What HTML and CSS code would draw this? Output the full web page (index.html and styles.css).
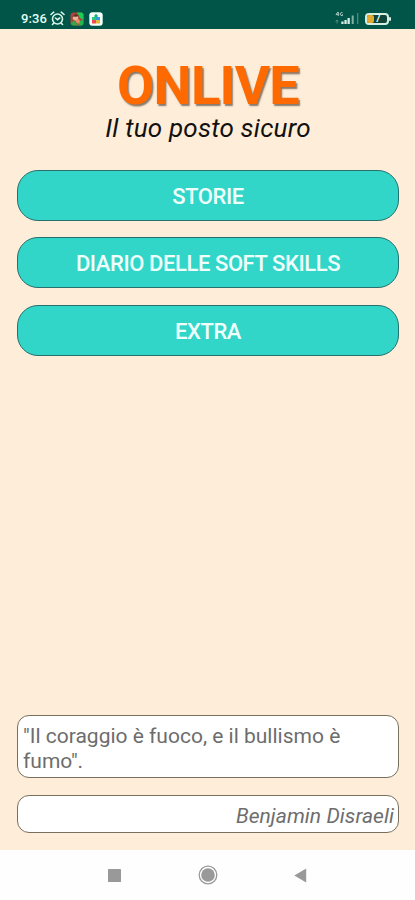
FILE: index.html
```html
<!DOCTYPE html>
<html lang="it">
<head>
<meta charset="utf-8">
<title>Onlive</title>
<link rel="stylesheet" href="styles.css">
</head>
<body>
<div class="screen">
  <header class="status">
    <div class="status-left">
      <span class="time">9:36</span>
      <svg class="alarm" width="15" height="15" viewBox="0 0 15 15" fill="none" stroke="#d7f5eb" stroke-width="1.6" stroke-linecap="round"><circle cx="7.5" cy="8" r="5"/><path d="M1 3.5 3.7 1.2M14 3.5 11.3 1.2M5.5 7 7.5 8.7 9.7 7M3.8 12 2.5 13.5M11.2 12l1.3 1.5"/></svg>
      <svg class="game" width="14" height="14" viewBox="0 0 14 14"><rect x=".5" y=".5" width="13" height="13" rx="3" fill="#a7473b"/><path d="M7 .5h4a2.5 2.5 0 0 1 2.5 2.5v5L10 6Z" fill="#1dcc55"/><path d="M1 10l4-1 4 4.5H3.5A2.5 2.5 0 0 1 1 11Z" fill="#39a548"/><path d="M9 9l4.5-1v3a2.5 2.5 0 0 1-2.5 2.5H9Z" fill="#21b84d"/><circle cx="5.5" cy="5.8" r="2.7" fill="#e9b69b"/><path d="M2 4.5 6 2l3 2-3 .7Z" fill="#632b29"/><path d="M5 8.5l4-1.5 1 3-2 2Z" fill="#ed8c67"/></svg>
      <svg class="puzzle" width="14" height="14" viewBox="0 0 14 14"><rect x=".3" y=".3" width="13.4" height="13.4" rx="3" fill="#f4fffa"/><path d="M3 5h2.6a1.6 1.6 0 1 1 2.8 0H7v3H3Z" fill="#2bc77b"/><path d="M7 5h4v3H7Z" fill="#329be0"/><path d="M3 8h4v3.5H3Z" fill="#f14b50"/><path d="M7 8h4v3.5H7Z" fill="#e5b83b"/><circle cx="7" cy="3.8" r="1.5" fill="#1eac74"/></svg>
    </div>
    <div class="status-right">
      <svg width="28" height="15" viewBox="0 0 28 15" fill="#d4eee5"><path d="M3.9 1 2 3.6h2.7M4.3 1v4" fill="none" stroke="#a9cbc0"/><path d="M8.5 1.7H7L6 3l1 1.5h1.5V3.2" fill="none" stroke="#a9cbc0"/><path d="M1.5 10.5 3 9l1.3 1.5M3 9v3.5" fill="none" stroke="#609989" stroke-width=".8"/><rect x="7.3" y="10.5" width="2.3" height="2.5"/><rect x="10.4" y="9" width="2.3" height="4"/><rect x="13.5" y="7" width="2.3" height="6"/><rect x="17.7" y="4.5" width="2" height="8.5" opacity=".6"/><rect x="23" y="2" width="1.3" height="11" opacity=".35"/></svg>
      <div class="battery"><span class="charge"></span><span class="level">7</span></div>
    </div>
  </header>
  <main>
    <h1>ONLIVE</h1>
    <p class="tagline">Il tuo posto sicuro</p>
    <nav class="menu">
      <button>STORIE</button>
      <button>DIARIO DELLE SOFT SKILLS</button>
      <button>EXTRA</button>
    </nav>
    <section class="quote">
      <p class="card">"Il coraggio è fuoco, e il bullismo è<br>fumo".</p>
      <p class="card author">Benjamin Disraeli</p>
    </section>
  </main>
  <footer class="navbar">
    <svg width="13" height="13" viewBox="0 0 13 13"><rect width="13" height="13" rx=".6" fill="#999"/></svg>
    <svg width="20" height="20" viewBox="0 0 20 20"><circle cx="10" cy="10" r="8.8" fill="#fff" stroke="#999" stroke-width="1.3"/><circle cx="10" cy="10" r="6.8" fill="#999"/></svg>
    <svg width="13" height="15" viewBox="0 0 13 15"><path d="M12.2.5v14L.3 7.5Z" fill="#999"/></svg>
  </footer>
</div>
</body>
</html>
```
FILE: styles.css
```css
* { box-sizing: border-box; margin: 0; padding: 0; }
body { font-family: Roboto, "Liberation Sans", sans-serif; }
.screen { width: 415px; height: 900px; display: flex; flex-direction: column; background: #feedd8; overflow: hidden; }
.status { height: 29px; flex: none; background: #005548; display: flex; justify-content: space-between; padding: 7px 26px 0 21px; }
.status-left, .status-right { display: flex; align-items: center; height: 23px; }
.time { font-size: 13px; font-weight: 500; color: #e4fff6; width: 29px; letter-spacing: .1px; }
.game { margin-left: 5px; }
.puzzle { margin-left: 5px; }
.status-right { gap: 3px; }
.battery { position: relative; width: 24px; height: 12px; border: 2px solid #d5eee2; border-radius: 4px; display: flex; align-items: center; background: #104438; }
.battery::after { content: ""; position: absolute; right: -4px; top: 2px; width: 2px; height: 4px; background: #d5eee2; border-radius: 1px; }
.charge { width: 7px; height: 8px; background: #e5a92f; border-radius: 2px; }
.level { font-size: 10px; font-weight: 500; line-height: 9px; color: #e4fff6; margin-left: 1px; }
main { flex: 1; display: flex; flex-direction: column; padding: 32px 16px 17px 17px; }
h1 { font-size: 54px; line-height: 50px; font-weight: 700; letter-spacing: -.7px; color: #ff6a00; text-align: center; text-shadow: 1.5px 1.5px 1.5px rgba(70,60,50,.65); }
.tagline { font-size: 26px; line-height: 26px; font-style: italic; letter-spacing: .22px; text-align: center; color: #111; margin-top: 4px; }
.menu { display: flex; flex-direction: column; gap: 16.7px; margin-top: 28.5px; }
button { height: 51px; border: 1px solid #26716e; border-radius: 21px; background: #31d6c8; color: #effffb; padding-top: 2px; font: 500 22px Roboto, "Liberation Sans", sans-serif; letter-spacing: -.42px; }
.quote { margin-top: auto; display: flex; flex-direction: column; gap: 17px; }
.card { background: #fff; border: 1px solid #77705f; border-radius: 12px; font-size: 21px; line-height: 25px; color: #6d6d6d; padding: 8px 4px 3px 5px; white-space: nowrap; }
.author { font-style: italic; letter-spacing: .06px; text-align: right; padding: 8px 4px 3px; }
.navbar { height: 50px; flex: none; background: #fefefe; display: flex; align-items: center; justify-content: space-between; padding: 0 108px; }
```
